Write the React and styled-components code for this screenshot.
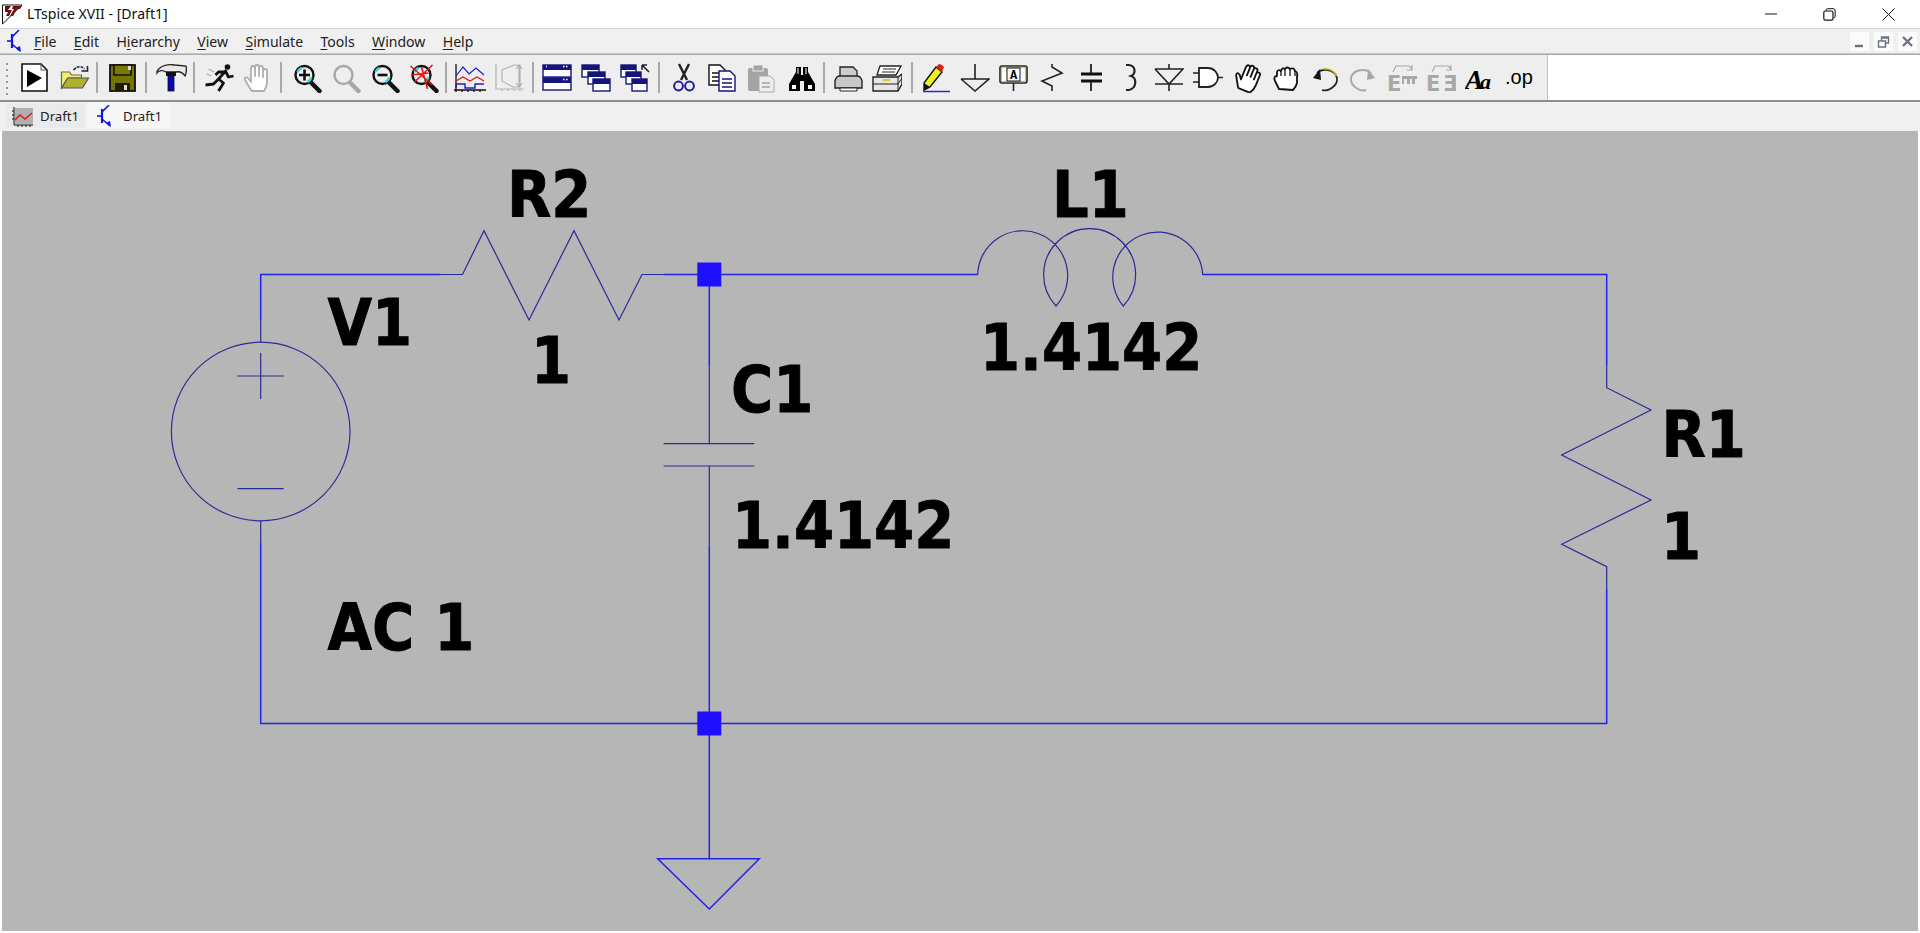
import React from 'react';
import styled, { createGlobalStyle } from 'styled-components';

const Global = createGlobalStyle`
  html, body { margin: 0; padding: 0; background: #fff; overflow: hidden; }
  #root { height: 933px; }
`;

const UI_FONT = `"Noto Sans", "Open Sans", "Liberation Sans", sans-serif`;

const Page = styled.div`
  height: 933px; width: 1920px; display: flex; flex-direction: column; background: #fff;
  font-family: ${UI_FONT}; color: #111; overflow: hidden;
`;
const TitleBar = styled.header`
  height: 28px; flex: none; display: flex; align-items: center; background: #fff; border-bottom: 1px solid #d2d2d2;
`;
const TitleLogo = styled.svg`margin-left: 2px; flex: none;`;
const TitleText = styled.div`margin-left: 4px; font-size: 14.1px; white-space: nowrap; position: relative; top: -1px;`;
const WindowControls = styled.div`margin-left: auto; display: flex; position: relative; left: -2px;`;
const WindowButton = styled.button`
  width: 59px; height: 28px; border: 0; background: none; padding: 0; display: flex; align-items: center; justify-content: center;
`;
const MenuBar = styled.nav`
  height: 24px; flex: none; display: flex; align-items: center; background: #f0f0f0; border-bottom: 1px solid #c8c8c8;
`;
const MenuIcon = styled.svg`margin-left: 6px; flex: none;`;
const MenuList = styled.div`margin-left: 12px; display: flex; gap: 17.4px;`;
const MenuItem = styled.span`font-size: 14.05px; color: #222; white-space: nowrap;`;
const Mnemonic = styled.span`text-decoration: underline; text-underline-offset: 2px; text-decoration-thickness: 1px;`;
const MdiControls = styled.div`margin-left: auto; margin-right: 3px; display: flex; gap: 5px;`;
const MdiButton = styled.button`
  width: 19px; height: 19px; padding: 0; border: 0; background: #fbfbfb; display: flex; align-items: center; justify-content: center;
`;
const ToolRow = styled.div`
  height: 45px; flex: none; display: flex; background: #fff; border-top: 1px solid #a9a9a9; border-bottom: 2px solid #8e8e8e;
`;
const Toolbar = styled.div`
  display: flex; align-items: center; background: #eeeeee; padding: 0 9px 0 15px; position: relative; border-right: 1px solid #c4c4c4;
`;
const Gripper = styled.span`
  position: absolute; left: 6px; top: 8px; width: 2px; height: 32px;
  background: repeating-linear-gradient(to bottom, #9a9a9a 0 2px, transparent 2px 6px);
`;
const ToolButton = styled.div`width: 38.9px; height: 30px; display: flex; align-items: center; justify-content: center; flex: none;`;
const ToolSep = styled.span`
  width: 9.4px; height: 31px; flex: none; display: flex; justify-content: center;
  &::before { content: ''; width: 2px; background: #a8a8a8; }
`;
const TabStrip = styled.div`
  height: 29px; flex: none; display: flex; align-items: flex-start; background: #f0f0f0; padding-left: 5px; gap: 2px;
`;
const Tab = styled.div`
  height: ${p => (p.$active ? 25 : 24)}px; margin-top: ${p => (p.$active ? 1 : 2)}px; width: ${p => (p.$active ? 84 : 80)}px;
  display: flex; align-items: center; background: ${p => (p.$active ? '#f7f7f7' : '#eaeaea')};
  padding-left: ${p => (p.$active ? 9 : 7)}px; gap: ${p => (p.$active ? 11 : 7)}px; box-sizing: border-box; font-size: 13.2px; color: #222;
`;
const Canvas = styled.main`
  flex: 1; margin: 0 2px 2px; background: #b6b6b6; min-height: 0;
`;
const Drawing = styled.svg`display: block; width: 100%; height: 100%;`;
const Wire = styled.path`fill: none; stroke: #2222ee; stroke-width: 1.5;`;
const Sym = styled.path`fill: none; stroke: #2a2a98; stroke-width: 1.2;`;
const Junction = styled.rect`fill: #1e10ff;`;
const Label = styled.text`
  font-family: "DejaVu Sans", "Liberation Sans", sans-serif; font-stretch: condensed; font-weight: 700; font-size: 64px; fill: #000;
  stroke: #000; stroke-width: 0.8px;
`;
const IconText = styled.text`font-family: ${p => p.$font || '"DejaVu Sans", sans-serif'};`;

const Ico = ({ children, w = 30, h = 30 }) => <svg width={w} height={h} viewBox={`0 0 ${w} ${h}`}>{children}</svg>;
const TallIco = ({ children }) => <svg width="30" height="40" viewBox="0 -5 30 40">{children}</svg>;

const Transistor = () => (
  <g fill="none" stroke="#1414e0" strokeWidth="1.6">
    <path d="M1 11H6" /><path d="M6 4V18" strokeWidth="2.2" /><path d="M6 7L13 0" /><path d="M6 14L14 21" />
    <path d="M10 18l5 4-1-6z" fill="#1414e0" stroke="none" />
  </g>
);

const Mag = ({ color = '#111', children, glint = true }) => (
  <Ico w={34}>
    <g transform="translate(3.5 0)">
      <path d="M19 19L28 28" stroke={color} strokeWidth="4.5" strokeLinecap="round" />
      <circle cx="13" cy="12" r="9" fill="#efefef" stroke={color} strokeWidth="2.4" />
      {glint && <path d="M6 9A8 8 0 0 1 10 5M20 14A8 8 0 0 1 16 19" stroke="#30d8e0" strokeWidth="2.6" fill="none" />}
      {children}
    </g>
  </Ico>
);

const Hand = ({ color, rot = 0, dx = 0 }) => (
  <Ico w={34}>
    <path transform={`translate(${2 + dx} 0) rotate(${rot} 15 15)`} d="M9 27L3 17Q2 13 6 15L9 19V6Q9 3 11 3Q13 3 13 6V13V4Q13 2 15 2Q17 2 17 4V13V5Q17 3 19 3Q21 3 21 5V14V8Q21 6 23 6Q25 6 25 8V19Q25 24 22 28H10Z" fill="#fff" stroke={color} strokeWidth="1.8" strokeLinejoin="round" />
  </Ico>
);
const ClosedHand = () => (
  <Ico>
    <path d="M8 26L4 18Q2 13 6 13V9Q7 6 10 8Q11 4 14 6Q16 3 19 6Q23 4 24 8Q27 9 26 14V20Q25 24 22 27Z" fill="#fff" stroke="#111" strokeWidth="1.8" strokeLinejoin="round" />
    <path d="M10 8V13M14 6V13M19 6V13M24 8V13" stroke="#111" strokeWidth="1.3" />
  </Ico>
);
const WinBox = ({ x, y, w, h }) => (
  <g>
    <rect x={x} y={y} width={w} height={h} fill="#fff" stroke="#14147c" strokeWidth="1.4" />
    <rect x={x} y={y} width={w} height={5} fill="#14147c" />
  </g>
);
const Doc = ({ x, y, w = 16, h = 20, stroke = '#111', lines = '#111' }) => (
  <g>
    <path d={`M${x} ${y}h${w - 5}l5 5v${h - 5}h-${w}z`} fill="#fff" stroke={stroke} strokeWidth="1.4" />
    <path d={`M${x + 3} ${y + 8}h${w - 6}M${x + 3} ${y + 12}h${w - 6}M${x + 3} ${y + 16}h${w - 6}`} stroke={lines} strokeWidth="1.4" />
  </g>
);

const icons = [
  <Ico><path d="M3 1H22L28 7V28H3Z" fill="#fff" stroke="#111" strokeWidth="1.6" /><path d="M22 1V7H28" fill="none" stroke="#555" /><path d="M8 7L23 15L8 24Z" fill="#000" /></Ico>,
  <Ico w={34}><g transform="translate(3.5 0)"><path d="M2 25V9h8l2 3h10v3H9L2 25z" fill="#f7ee70" stroke="#666" strokeWidth="1.2" /><path d="M2 25L8 15H29L23 25z" fill="#b0b030" stroke="#555" strokeWidth="1.2" /><path d="M14 7Q20 1 25 6" fill="none" stroke="#222" strokeWidth="1.6" strokeDasharray="3 1" /><path d="M22 8h6V3" fill="none" stroke="#222" strokeWidth="1.6" /></g></Ico>,
  <Ico><rect x="3" y="2" width="25" height="26" fill="#747400" stroke="#111" strokeWidth="1.8" /><path d="M7 2h17v10H7z" fill="#7a7a00" stroke="#111" strokeWidth="1.6" /><rect x="21" y="3" width="3" height="4" fill="#ddd" /><rect x="8" y="20" width="15" height="8" fill="#1c1c00" /><rect x="17" y="22" width="3" height="5" fill="#ddd" /></Ico>,
  <Ico w={34}><g transform="translate(3 0)"><path d="M1 8C5 2 13 1 19 2L30 3C31 8 30 11 29 13C27 10 24 8 20 9H10C7 7 3 7 1 10Z" fill="#e8e8e8" stroke="#222" strokeWidth="1.3" /><rect x="10" y="9" width="10" height="4" fill="#111" /><rect x="12" y="13" width="6" height="15" fill="#0808b8" stroke="#111" strokeWidth=".8" /></g></Ico>,
  <Ico w={34}><g transform="translate(3.5 0)"><circle cx="23" cy="4" r="2.8" fill="#111" /><path d="M22 7L14 16L19 20L14 28M14 16L9 21L1 22M20 9L14 9L11 12M21 8L24 14L29 13" fill="none" stroke="#111" strokeWidth="2.8" strokeLinejoin="round" /><path d="M4 6L10 9M2 11L7 13" stroke="#aaa" strokeWidth="1.2" /></g></Ico>,
  <Hand color="#aeaeae" dx={0} />,
  <Mag><path d="M7.5 12H18.5M13 6.5V17.5" stroke="#111" strokeWidth="2.6" /></Mag>,
  <Mag color="#a8a8a8" glint={false} />,
  <Mag><path d="M8 12H18" stroke="#111" strokeWidth="2.6" /></Mag>,
  <Mag><path d="M2 3L24 22M24 2L6 19M13 4L19 26M3 12L20 10" stroke="#e01818" strokeWidth="1.6" /></Mag>,
  <Ico w={34}><path d="M3 1V27H33M1 27h2M3 29v-2M9 29v-2M15 29v-2M21 29v-2M27 29v-2" stroke="#111" strokeWidth="1.3" fill="none" /><path d="M3 13L10 4L16 11L23 5L31 12" stroke="#1c1ccc" fill="none" strokeWidth="1.2" /><path d="M3 18L10 14L17 18L24 14L31 18" stroke="#e01818" fill="none" strokeWidth="1.4" /><path d="M3 25V21H12V25H22V21H31" stroke="#1c1ccc" fill="none" strokeWidth="1.4" /></Ico>,
  <Ico><path d="M2 1V26H30M2 8H1M2 14H1M2 20H1M8 28v-2M14 28v-2M20 28v-2M26 28v-2" stroke="#b4b4b4" strokeWidth="1.2" fill="none" /><path d="M8 7L20 2H26V24H19L8 18Z" stroke="#b4b4b4" fill="none" strokeWidth="1.2" /><path d="M25 3V23M22 6L25 2L28 6M22 20L25 24L28 20" stroke="#a0a0a0" fill="none" /></Ico>,
  <Ico><WinBox x={1} y={2} w={28} h={12} /><WinBox x={1} y={15} w={28} h={12} /><path d="M24 3.5h1.5M21 3.5h1.5M24 16.5h1.5M21 16.5h1.5M4 3.5h1" stroke="#fff" strokeWidth="1.4" /></Ico>,
  <Ico><WinBox x={1} y={2} w={17} h={12} /><WinBox x={7} y={9} w={17} h={12} /><WinBox x={12} y={16} w={17} h={12} /></Ico>,
  <Ico><WinBox x={1} y={2} w={15} h={12} /><WinBox x={6} y={9} w={15} h={12} /><WinBox x={12} y={16} w={15} h={12} /><path d="M22 2H27M22 2V7M22 2L29 9" stroke="#222" strokeWidth="1.5" fill="none" /></Ico>,
  <Ico><path d="M10 1L18 17M20 1L12 17" stroke="#222" strokeWidth="2.4" /><circle cx="9.5" cy="23" r="4.4" fill="none" stroke="#1c1c9c" strokeWidth="2" /><circle cx="20.5" cy="23" r="4.4" fill="none" stroke="#1c1c9c" strokeWidth="2" /></Ico>,
  <Ico><Doc x={2} y={2} /><Doc x={12} y={8} stroke="#14147c" lines="#14147c" /></Ico>,
  <Ico><rect x="2" y="5" width="20" height="23" rx="2" fill="#a4a4a4" /><rect x="7" y="2" width="10" height="6" fill="#a4a4a4" stroke="#eee" /><path d="M13 13h11l4 4v12H13z" fill="#eee" stroke="#aaa" /><path d="M16 20h8M16 24h8" stroke="#a4a4a4" strokeWidth="1.4" /></Ico>,
  <Ico w={34}><g transform="translate(4 0)"><path d="M9 4h5v8h2V4h5v5l7 12v7H17V18h-4v10H2v-7L9 9z" fill="#000" /><path d="M5 22h4v4H5zM21 22h4v4h-4z" fill="#fff" /><path d="M10 5h2v6h-2zM18 5h2v6h-2z" fill="#888" /></g></Ico>,
  <Ico><path d="M7 4H20L24 8V14H7z" fill="#ccc" stroke="#222" strokeWidth="1.3" /><path d="M2 18Q3 13 7 13H24Q28 13 29 18V25H2z" fill="#c8c8c8" stroke="#222" strokeWidth="1.4" /><path d="M7 25h17v3H7z" fill="#fff" stroke="#222" /></Ico>,
  <Ico><path d="M8 3H29L24 12H5z" fill="#fff" stroke="#222" strokeWidth="1.3" /><path d="M11 6H24M10 9H23" stroke="#222" /><path d="M1 14H26L30 11V21L26 28H1z" fill="#e6e6e6" stroke="#222" strokeWidth="1.4" /><path d="M1 21H26L30 15M26 14V28" stroke="#222" fill="none" /><path d="M11 17H18" stroke="#d8c820" strokeWidth="2" /></Ico>,
  <Ico><path d="M3 27V20L15 4L21 9L9 24Z" fill="#f0f020" stroke="#111" strokeWidth="1.4" /><path d="M15 4L18 1Q21 1 23 4L21 9Z" fill="#e02020" /><path d="M3 27V20L9 24Z" fill="#111" /><path d="M2 28.5H29" stroke="#2828c8" strokeWidth="1.5" /></Ico>,
  <Ico><path d="M15 1V16M1 16H29L15 28L1 16" fill="none" stroke="#222" strokeWidth="1.6" /></Ico>,
  <TallIco><rect x="2" y="3" width="27" height="17" rx="2" fill="#fff" stroke="#222" strokeWidth="1.6" /><rect x="3.5" y="4.5" width="24" height="14" fill="none" stroke="#c8c850" strokeWidth="1.2" /><rect x="9" y="5" width="13" height="13" fill="#fff" stroke="#111" /><IconText x="15.5" y="16" fontSize="12" fontWeight="700" textAnchor="middle" $font={'"Liberation Mono", monospace'}>A</IconText><path d="M15.5 20V28" stroke="#222" strokeWidth="1.6" /></TallIco>,
  <Ico><path d="M15 1V4L25 10L5 18L15 23V28" fill="none" stroke="#222" strokeWidth="1.6" /></Ico>,
  <Ico><path d="M15 1V11M15 18V28" stroke="#222" strokeWidth="1.8" /><path d="M5 11H26M5 18H26" stroke="#111" strokeWidth="3" /></Ico>,
  <Ico><path d="M11 2H14C21 3 21 11 16 13C22 15 22 25 14 27H11" fill="none" stroke="#222" strokeWidth="2.2" /></Ico>,
  <Ico><path d="M15 1V6M15 21V28M1 21H29M1 6H29L15 21L1 6" fill="none" stroke="#222" strokeWidth="1.6" /></Ico>,
  <Ico><path d="M6 5H15C21 5 25 10 25 14.5C25 19 21 24 15 24H6Z" fill="#fff" stroke="#222" strokeWidth="1.8" /><path d="M0 10H6M0 19H6M25 14.5H30" stroke="#222" strokeWidth="1.6" /></Ico>,
  <Hand color="#111" rot={22} dx={1} />,
  <ClosedHand />,
  <Ico><path d="M7 10C12 5 25 6 27 15C28 23 18 29 12 27" fill="none" stroke="#222" strokeWidth="1.7" /><path d="M13 6C20 5 25 9 26.5 13" fill="none" stroke="#c8b820" strokeWidth="1.5" /><path d="M3 15L10 6L11 17Z" fill="#111" /></Ico>,
  <Ico><path d="M23 10C18 5 5 6 3 15C2 23 12 29 18 27" fill="none" stroke="#a8a8a8" strokeWidth="1.9" /><path d="M27 15L20 6L19 17Z" fill="#a8a8a8" /></Ico>,
  <TallIco><IconText x="0" y="28" fontSize="21" fontWeight="700" fill="#a8a8a8">E</IconText><path d="M15 13H30V16H28V21H25V16H23V21H20V16H17V21H15Z" fill="#a8a8a8" /><path d="M6 9L9 3H22L25 6M25 2V7H20" fill="none" stroke="#a8a8a8" strokeWidth="1.1" /></TallIco>,
  <TallIco><IconText x="0" y="28" fontSize="21" fontWeight="700" fill="#a8a8a8">E</IconText><IconText x="17" y="28" fontSize="21" fontWeight="700" fill="#a8a8a8">Ǝ</IconText><path d="M6 9L9 3H22L25 6M25 2V7H20" fill="none" stroke="#a8a8a8" strokeWidth="1.1" /></TallIco>,
  <TallIco><IconText x="0" y="26" fontSize="28" fontWeight="700" fontStyle="italic" $font={'"Liberation Serif", serif'}>A</IconText><IconText x="15" y="26" fontSize="22" fontWeight="700" fontStyle="italic" $font={'"Liberation Serif", serif'}>a</IconText></TallIco>,
  <TallIco><IconText x="1" y="21" fontSize="20" $font={'"Liberation Sans", sans-serif'}>.op</IconText></TallIco>,
];
const SEP_AFTER = new Set([1, 2, 3, 5, 9, 11, 14, 18, 20]);

const MENU = [
  ['F', 'ile', ''], ['E', 'dit', ''], ['H', 'ierarchy', 'i'], ['V', 'iew', ''], ['S', 'imulate', ''], ['T', 'ools', ''], ['W', 'indow', ''], ['H', 'elp', ''],
];

const Schematic = () => (
  <Drawing viewBox="2 131 1916 800">
    <Wire d="M440 274.5H260.7V320" />
    <Wire d="M663.6 274.5H977.7" />
    <Wire d="M1202.7 274.5H1606.7V365" />
    <Wire d="M1606.7 589V723.5H260.7V543" />
    <Wire d="M709.3 274.5V366.7M709.3 546V723.5V858.7" />
    <Sym d="M260.7 320V342M260.7 520.7V543" />
    <circle cx="260.7" cy="431.5" r="89.3" fill="none" stroke="#2a2a98" strokeWidth="1.2" />
    <Sym d="M237.5 376H283.6M260.7 353V399M237.5 488.7H283.6" />
    <Sym d="M440 274.5H462.5L484 230.7L529 320L574 230.7L619 320L642 274.5H663.6" />
    <Sym d="M709.3 366.7V443.7M663.6 443.7H754.3M663.6 466H754.3M709.3 466V546" />
    <Sym d="M977.7 274.7A45 45 0 1 1 1056 306A46 46 0 1 1 1123.3 306A45 45 0 1 1 1202.7 274.7" />
    <Sym d="M1606.7 365V387.7L1651 410L1561.7 455L1651 500L1561.7 544.3L1606.7 566.7V589" />
    <path d="M657.7 858.7H759.3L709.3 909Z" fill="none" stroke="#2222ee" strokeWidth="1.5" />
    <Junction x="697.3" y="262.5" width="24" height="24" />
    <Junction x="697.3" y="711.5" width="24" height="24" />
    <Label x="507" y="216.7">R2</Label>
    <Label x="531" y="383.3">1</Label>
    <Label x="327.5" y="345">V1</Label>
    <Label x="731" y="412">C1</Label>
    <Label x="732" y="547.5">1.4142</Label>
    <Label x="1052" y="216.5">L1</Label>
    <Label x="980" y="369.5">1.4142</Label>
    <Label x="1661.5" y="457">R1</Label>
    <Label x="1661" y="558.5">1</Label>
    <Label x="327.5" y="649.5">AC 1</Label>
  </Drawing>
);

export default function App() {
  return (
    <Page>
      <Global />
      <TitleBar>
        <TitleLogo width="21" height="21" viewBox="0 0 21 21">
          <path d="M.5 1H20L.5 20Z" fill="#fff" stroke="#111" />
          <path d="M3 2H9L6 6H10L7 12H4L6 8H3ZM11 2H20L18 5H15L11 12H8L12 5H10Z" fill="#6e1014" />
        </TitleLogo>
        <TitleText>LTspice XVII - [Draft1]</TitleText>
        <WindowControls>
          <WindowButton><svg width="12" height="12" viewBox="0 0 12 12"><path d="M0 6H12" stroke="#111" /></svg></WindowButton>
          <WindowButton><svg width="13" height="13" viewBox="0 0 13 13"><rect x=".8" y="3" width="9.2" height="9.2" rx="1.6" fill="none" stroke="#111" strokeWidth="1.2" /><path d="M3.2 2.6V2Q3.2.7 4.5.7H10Q12.2.7 12.2 3V8.4Q12.2 9.6 10.6 9.7" fill="none" stroke="#111" /></svg></WindowButton>
          <WindowButton><svg width="13" height="13" viewBox="0 0 13 13"><path d="M.5.5L12.5 12.5M12.5.5L.5 12.5" stroke="#111" /></svg></WindowButton>
        </WindowControls>
      </TitleBar>
      <MenuBar>
        <MenuIcon width="16" height="23" viewBox="0 0 16 23"><Transistor /></MenuIcon>
        <MenuList>
          {MENU.map(([a, b, u], i) => (
            <MenuItem key={i}>
              {u ? <>{a}<Mnemonic>{u}</Mnemonic>{b.slice(1)}</> : <><Mnemonic>{a}</Mnemonic>{b}</>}
            </MenuItem>
          ))}
        </MenuList>
        <MdiControls>
          <MdiButton><svg width="13" height="13" viewBox="0 0 13 13"><path d="M2 11H10" stroke="#6a7480" strokeWidth="2.4" /></svg></MdiButton>
          <MdiButton><svg width="13" height="13" viewBox="0 0 13 13"><path d="M1.5 6H8.5V12H1.5ZM4.5 6V2H11.5V8H9M4.5 3H11.5" fill="none" stroke="#6a7480" strokeWidth="1.4" /></svg></MdiButton>
          <MdiButton><svg width="13" height="13" viewBox="0 0 13 13"><path d="M2 2L11 11M11 2L2 11" stroke="#6a7480" strokeWidth="2.4" /></svg></MdiButton>
        </MdiControls>
      </MenuBar>
      <ToolRow>
        <Toolbar>
          <Gripper />
          {icons.map((ic, i) => (
            <React.Fragment key={i}>
              <ToolButton>{ic}</ToolButton>
              {SEP_AFTER.has(i) && <ToolSep />}
            </React.Fragment>
          ))}
        </Toolbar>
      </ToolRow>
      <TabStrip>
        <Tab>
          <svg width="21" height="21" viewBox="0 0 21 21">
            <rect x="3" y="2" width="18" height="16" fill="#b0b0b0" />
            <path d="M2 1V19H21M0 5H2M0 9H2M0 13H2M6 21v-2M10 21v-2M14 21v-2M18 21v-2" stroke="#111" fill="none" />
            <path d="M3 14L8 9L13 13L20 7" fill="none" stroke="#e01818" strokeWidth="1.5" />
          </svg>
          Draft1
        </Tab>
        <Tab $active>
          <svg width="16" height="22" viewBox="0 0 16 22"><Transistor /></svg>
          Draft1
        </Tab>
      </TabStrip>
      <Canvas><Schematic /></Canvas>
    </Page>
  );
}
